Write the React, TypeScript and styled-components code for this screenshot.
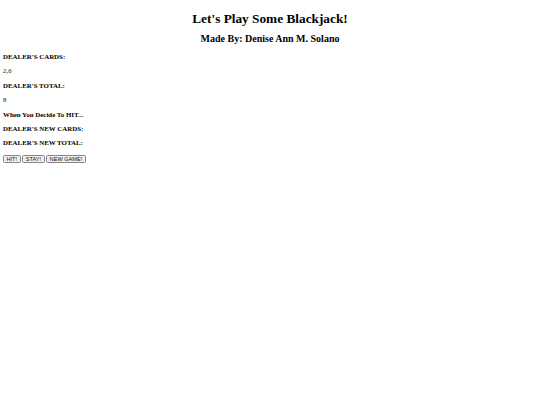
import React from "react";
import styled, { createGlobalStyle } from "styled-components";

const Global = createGlobalStyle`
  html, body { background: #ffffff; }
  body {
    margin: 0;
    font-family: "Liberation Serif", "Times New Roman", serif;
    color: #000000;
  }
`;

const Page = styled.div`
  padding: 0.1px 3px 0;
`;

const Title = styled.h1`
  font-size: 13.3px;
  line-height: 15px;
  font-weight: bold;
  text-align: center;
  margin: 10.5px 0 7px;
`;

const Subtitle = styled.h3`
  font-size: 10px;
  line-height: 12px;
  font-weight: bold;
  text-align: center;
  margin: 7px 0 8.5px;
`;

const Label = styled.h5`
  font-size: 6.9px;
  line-height: 8px;
  font-weight: bold;
  margin: 6.4px 0;
`;

const Value = styled.p`
  font-size: 6.9px;
  line-height: 8px;
  margin: 6.4px 0;
  color: #222;
`;

const ButtonRow = styled.div`
  display: flex;
  gap: 1.6px;
  margin-top: 7.3px;
`;

const Button = styled.button`
  font-family: "Liberation Sans", Arial, sans-serif;
  font-size: 5.6px;
  line-height: 6px;
  padding: 0 2.5px;
  background: #efefef;
  border: 0.8px solid #858585;
  border-radius: 1.5px;
  color: #111;
`;

export default function App() {
  return (
    <Page>
      <Global />
      <Title>Let's Play Some Blackjack!</Title>
      <Subtitle>Made By: Denise Ann M. Solano</Subtitle>
      <Label>DEALER'S CARDS:</Label>
      <Value>2,6</Value>
      <Label>DEALER'S TOTAL:</Label>
      <Value>8</Value>
      <Label>When You Decide To HIT...</Label>
      <Label>DEALER'S NEW CARDS:</Label>
      <Label>DEALER'S NEW TOTAL:</Label>
      <ButtonRow>
        <Button>HIT!</Button>
        <Button>STAY!</Button>
        <Button>NEW GAME!</Button>
      </ButtonRow>
    </Page>
  );
}
